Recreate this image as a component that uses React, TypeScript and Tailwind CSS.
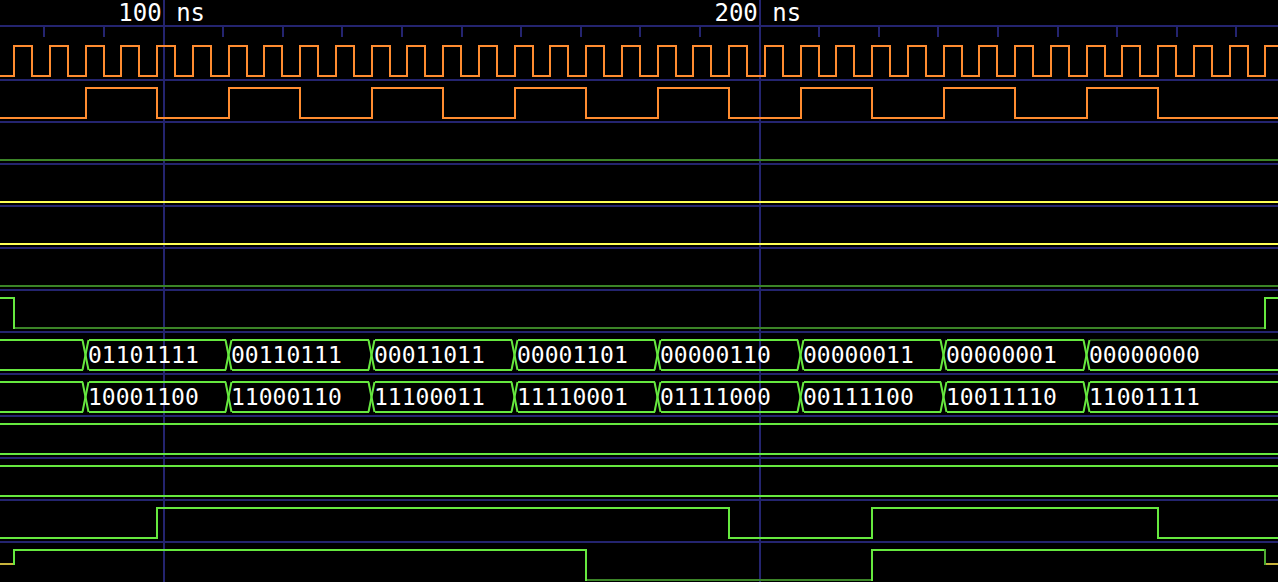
import React from 'react';

const W = 1278;
const BLUE = '#24246f';
const ORANGE = '#ff8c30';
const GREEN = '#66e83f';
const DGREEN = '#3b8427';
const DDGREEN = '#2f6420';
const MGREEN = '#4fae33';
const YELLOW = '#ffff55';
const DYELLOW = '#c9b43c';

const H = 7;
const L = 37;
const M = 21;

const edge = (k: number) => Math.round(13.2 + 35.75 * k);
const fallEdge = (k: number) => Math.round(31.1 + 35.75 * k);

type Seg = { x: number; y: number; c: string; ec?: string };

function Digital({ segs, extra }: { segs: Seg[]; extra?: Seg[] }) {
  const els: React.ReactNode[] = [];
  const draw = (list: Seg[], p: string) => {
    list.forEach((s, i) => {
      const xe = i + 1 < list.length ? list[i + 1].x + 2 : W;
      els.push(<rect key={p + 'h' + i} x={s.x} y={s.y - 1} width={xe - s.x} height={2} fill={s.c} />);
      if (i > 0) {
        const q = list[i - 1];
        els.push(
          <rect
            key={p + 'v' + i}
            x={s.x}
            y={Math.min(q.y, s.y) - 1}
            width={2}
            height={Math.abs(q.y - s.y) + 2}
            fill={s.ec ?? s.c}
          />
        );
      }
    });
  };
  draw(segs, 'a');
  if (extra) draw(extra, 'b');
  return (
    <svg width={W} height={40} shapeRendering="crispEdges" className="block">
      {els}
    </svg>
  );
}

function Bus({ values, lastTop }: { values: string[]; lastTop?: string }) {
  const cs = Array.from({ length: 8 }, (_, j) => edge(2 + 4 * j) + 0.5);
  const els: React.ReactNode[] = [];
  for (let i = 0; i <= 8; i++) {
    const start = i === 0 ? 0 : cs[i - 1] + 3;
    const end = i === 8 ? W : cs[i] - 3;
    const topColor = i === 8 && lastTop ? lastTop : GREEN;
    els.push(<rect key={'t' + i} x={start} y={H - 1} width={end - start} height={2} fill={topColor} shapeRendering="crispEdges" />);
    els.push(<rect key={'b' + i} x={start} y={L - 1} width={end - start} height={2} fill={GREEN} shapeRendering="crispEdges" />);
    if (i > 0 && values[i]) {
      els.push(
        <text
          key={'x' + i}
          x={cs[i - 1] + 2.5}
          y={30}
          fill="#ffffff"
          fontSize={23}
          fontFamily='"DejaVu Sans Mono", monospace'
        >
          {values[i]}
        </text>
      );
    }
  }
  cs.forEach((c, j) => {
    els.push(<line key={'d1' + j} x1={c - 3} y1={H} x2={c + 3} y2={L} stroke={GREEN} strokeWidth={2} />);
    els.push(<line key={'d2' + j} x1={c - 3} y1={L} x2={c + 3} y2={H} stroke={GREEN} strokeWidth={2} />);
  });
  return (
    <svg width={W} height={40} className="block">
      {els}
    </svg>
  );
}

function clockSegs(): Seg[] {
  const segs: Seg[] = [{ x: 0, y: L, c: ORANGE }];
  for (let k = 0; ; k++) {
    const r = edge(k);
    if (r >= W) break;
    segs.push({ x: r, y: H, c: ORANGE });
    const f = fallEdge(k);
    if (f >= W) break;
    segs.push({ x: f, y: L, c: ORANGE });
  }
  return segs;
}

function slowSegs(): Seg[] {
  const segs: Seg[] = [{ x: 0, y: L, c: ORANGE }];
  for (let j = 0; j < 8; j++) {
    segs.push({ x: edge(2 + 4 * j), y: H, c: ORANGE });
    segs.push({ x: edge(4 + 4 * j), y: L, c: ORANGE });
  }
  return segs;
}

function Row({ children }: { children: React.ReactNode }) {
  return <div className="h-[42px] border-b-2 border-[#24246f]">{children}</div>;
}

function Header() {
  const ticks: number[] = [];
  for (let k = -2; k <= 18; k++) {
    if (k === 0 || k === 10) continue;
    ticks.push(Math.round(162.5 + 59.6 * k));
  }
  return (
    <div className="h-[39px]">
      <svg width={W} height={39} className="block">
        <text
          x={161.7}
          y={21}
          textAnchor="middle"
          fill="#ffffff"
          fontSize={24}
          fontFamily='"DejaVu Sans Mono", monospace'
        >
          100 ns
        </text>
        <text
          x={757.8}
          y={21}
          textAnchor="middle"
          fill="#ffffff"
          fontSize={24}
          fontFamily='"DejaVu Sans Mono", monospace'
        >
          200 ns
        </text>
        <rect x={0} y={25} width={W} height={2} fill={BLUE} shapeRendering="crispEdges" />
        {ticks.map((t) => (
          <rect key={t} x={t} y={27} width={2} height={10} fill={BLUE} shapeRendering="crispEdges" />
        ))}
      </svg>
    </div>
  );
}

export default function App() {
  const busA = ['', '01101111', '00110111', '00011011', '00001101', '00000110', '00000011', '00000001', '00000000'];
  const busB = ['', '10001100', '11000110', '11100011', '11110001', '01111000', '00111100', '10011110', '11001111'];

  const row7: Seg[] = [
    { x: 0, y: H, c: GREEN },
    { x: edge(0), y: L, c: DGREEN, ec: GREEN },
    { x: edge(35), y: H, c: GREEN, ec: GREEN },
  ];
  const row12: Seg[] = [
    { x: 0, y: L, c: GREEN },
    { x: edge(4), y: H, c: GREEN },
    { x: edge(20), y: L, c: GREEN },
    { x: edge(24), y: H, c: GREEN },
    { x: edge(32), y: L, c: GREEN },
  ];
  const row13: Seg[] = [
    { x: 0, y: M, c: DYELLOW },
    { x: edge(0), y: H, c: GREEN, ec: GREEN },
    { x: edge(16), y: L, c: DGREEN, ec: GREEN },
    { x: edge(24), y: H, c: GREEN, ec: GREEN },
    { x: edge(35), y: M, c: DYELLOW, ec: MGREEN },
  ];

  return (
    <div className="relative w-[1278px] h-[582px] overflow-hidden bg-black">
      <div className="absolute top-0 bottom-0 left-[163px] w-[2px] bg-[#24246f]" />
      <div className="absolute top-0 bottom-0 left-[759px] w-[2px] bg-[#24246f]" />
      <div className="relative flex flex-col">
        <Header />
        <Row>
          <Digital segs={clockSegs()} />
        </Row>
        <Row>
          <Digital segs={slowSegs()} />
        </Row>
        <Row>
          <Digital segs={[{ x: 0, y: L, c: DGREEN }]} />
        </Row>
        <Row>
          <Digital segs={[{ x: 0, y: L, c: YELLOW }]} />
        </Row>
        <Row>
          <Digital segs={[{ x: 0, y: L, c: YELLOW }]} />
        </Row>
        <Row>
          <Digital segs={[{ x: 0, y: L, c: DGREEN }]} />
        </Row>
        <Row>
          <Digital segs={row7} />
        </Row>
        <Row>
          <Bus values={busA} lastTop={DDGREEN} />
        </Row>
        <Row>
          <Bus values={busB} />
        </Row>
        <Row>
          <Digital segs={[{ x: 0, y: H, c: GREEN }]} extra={[{ x: 0, y: L, c: GREEN }]} />
        </Row>
        <Row>
          <Digital segs={[{ x: 0, y: H, c: GREEN }]} extra={[{ x: 0, y: L, c: GREEN }]} />
        </Row>
        <Row>
          <Digital segs={row12} />
        </Row>
        <Row>
          <Digital segs={row13} />
        </Row>
      </div>
    </div>
  );
}
